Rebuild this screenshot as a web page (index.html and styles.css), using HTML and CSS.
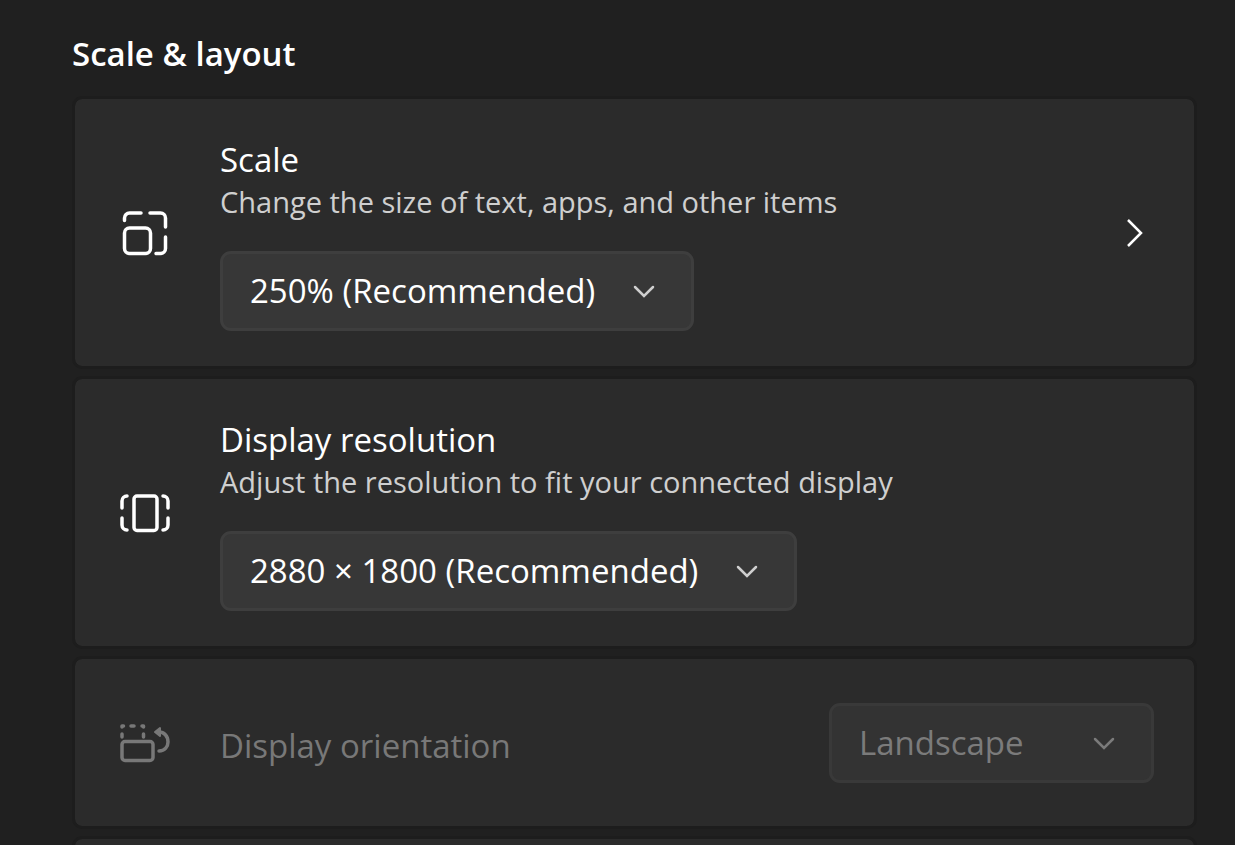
FILE: index.html
```html
<!DOCTYPE html>
<html lang="en">
<head>
    <meta charset="UTF-8">
    <meta name="viewport" content="width=device-width, initial-scale=1.0">
    <title>Display settings</title>
    <link rel="stylesheet" href="styles.css">
</head>
<body>

    <main class="settings">
        <h1>Scale &amp; layout</h1>

        <!-- Scale -->
        <section class="card">
            <svg class="card-icon" viewBox="0 0 54 54" aria-hidden="true">
                <path d="M6.500 14.500V12a5 5 0 0 1 5-5H23M32 7H42.500a5 5 0 0 1 5 5V21M47.500 31V42.500a5 5 0 0 1-5 5H38"/>
                <rect x="6.500" y="22" width="26" height="25.500" rx="5"/>
            </svg>
            <div class="card-body">
                <label class="card-title" for="scale">Scale</label>
                <p class="card-text">Change the size of text, apps, and other items</p>
                <div class="dropdown dropdown-scale">
                    <select id="scale">
                        <option>250% (Recommended)</option>
                    </select>
                    <svg class="arrow" viewBox="0 0 22 14" aria-hidden="true"><path d="M2 2L11 11L20 2"/></svg>
                </div>
            </div>
            <button class="open-btn" type="button" aria-label="Custom scaling">
                <svg viewBox="0 0 18 30" aria-hidden="true"><path d="M2 2L15 15L2 28"/></svg>
            </button>
        </section>

        <!-- Display resolution -->
        <section class="card">
            <svg class="card-icon" viewBox="0 0 54 54" aria-hidden="true">
                <rect x="16" y="10" width="23" height="34.500" rx="3"/>
                <path d="M9 10a5 5 0 0 0-5 5V22M4 32V39a5 5 0 0 0 5 5M45 10a5 5 0 0 1 5 5V22M50 32V39a5 5 0 0 1-5 5"/>
            </svg>
            <div class="card-body">
                <label class="card-title" for="resolution">Display resolution</label>
                <p class="card-text">Adjust the resolution to fit your connected display</p>
                <div class="dropdown dropdown-resolution">
                    <select id="resolution">
                        <option>2880 × 1800 (Recommended)</option>
                    </select>
                    <svg class="arrow" viewBox="0 0 22 14" aria-hidden="true"><path d="M2 2L11 11L20 2"/></svg>
                </div>
            </div>
        </section>

        <!-- Display orientation -->
        <section class="card card-row disabled">
            <svg class="card-icon" viewBox="0 0 54 54" aria-hidden="true">
                <rect x="4" y="25.500" width="31" height="19" rx="3"/>
                <path d="M4 11V10H5.500M13 10H16M24 10H25.500V11M4 18V21M25.500 18V21M41 35C47 35 50 30.500 50 26C50 20 46 16 41 16"/>
                <path class="filled" d="M37 16L42 12V20Z"/>
            </svg>
            <div class="card-body">
                <label class="card-title" for="orientation">Display orientation</label>
            </div>
            <div class="dropdown dropdown-orientation">
                <select id="orientation" disabled>
                    <option>Landscape</option>
                </select>
                <svg class="arrow" viewBox="0 0 22 14" aria-hidden="true"><path d="M2 2L11 11L20 2"/></svg>
            </div>
        </section>

        <section class="card card-row"></section>
    </main>

</body>
</html>
```

FILE: styles.css
```css
* {
    margin: 0;
    padding: 0;
    box-sizing: border-box;
}

body {
    background-color: #202020;
    color: #fff;
    font-family: 'Open Sans', 'Noto Sans', sans-serif;
}

.settings {
    height: 100vh;
    overflow: hidden;
    padding: 32px 38px 0 72px;
}

h1 {
    font-size: 33px;
    font-weight: 600;
    line-height: 44px;
    margin-bottom: 20px;
}

/* Setting cards */
.card {
    display: flex;
    align-items: center;
    min-height: 273px;
    margin-bottom: 7px;
    padding: 0 40px 0 43px;
    background-color: #2b2b2b;
    background-clip: padding-box;
    border: 3px solid #1d1d1d;
    border-radius: 10px;
}

.card-row {
    min-height: 173px;
}

.card-icon {
    flex: none;
    width: 54px;
    height: 54px;
    margin-right: 48px;
    fill: none;
    stroke: #fff;
    stroke-width: 3.5;
    stroke-linecap: round;
    stroke-linejoin: round;
}

.card-body {
    flex: 1;
    padding-top: 2px;
}

.card-row .card-body {
    padding-top: 6px;
}

.card-title {
    display: block;
    font-size: 33px;
    line-height: 46px;
}

.card-text {
    font-size: 29px;
    line-height: 38px;
    color: #cfcfcf;
    margin-bottom: 30px;
}

/* Dropdowns */
.dropdown {
    position: relative;
    max-width: 100%;
}

.dropdown-scale {
    width: 474px;
}

.dropdown-resolution {
    width: 577px;
}

.dropdown-orientation {
    width: 325px;
}

select {
    display: block;
    width: 100%;
    height: 80px;
    padding: 0 80px 0 27px;
    appearance: none;
    background-color: #373737;
    border: 3px solid #3e3e3e;
    border-radius: 11px;
    color: #fff;
    font-family: inherit;
    font-size: 33px;
}

.arrow {
    position: absolute;
    top: 34px;
    right: 39px;
    width: 22px;
    height: 14px;
    fill: none;
    stroke: #cfcfcf;
    stroke-width: 2.5;
    stroke-linecap: round;
    pointer-events: none;
}

.open-btn {
    background: none;
    border: none;
    padding: 10px;
    cursor: pointer;
}

.open-btn svg {
    display: block;
    width: 18px;
    height: 30px;
    fill: none;
    stroke: #fff;
    stroke-width: 2.5;
}

/* Disabled setting */
.disabled .card-title {
    color: #787878;
}

.disabled .card-icon {
    stroke: #787878;
}

.disabled .filled {
    fill: #787878;
    stroke-width: 2;
}

.disabled select {
    background-color: #333;
    border-color: #393939;
    color: #7b7b7b;
    opacity: 1;
}

.disabled .arrow {
    stroke: #7b7b7b;
}
```
